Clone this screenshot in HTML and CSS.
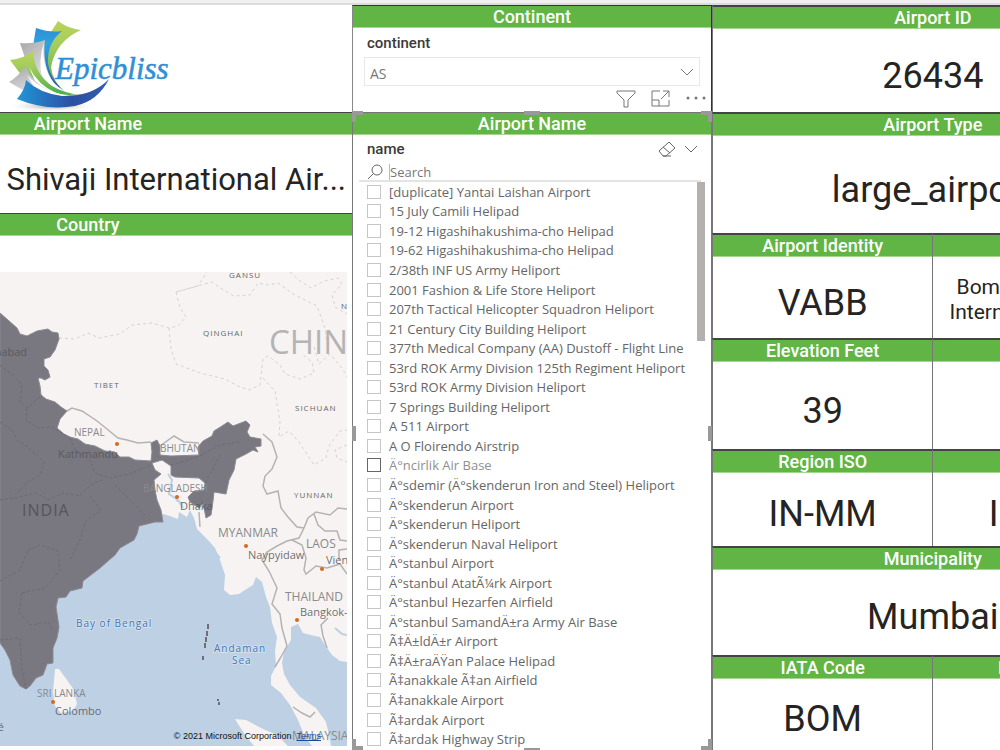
FILE: index.html
```html
<!DOCTYPE html>
<html lang="en">
<head>
<meta charset="utf-8">
<title>Airport report</title>
<link rel="stylesheet" href="styles.css">
</head>
<body>
<div class="topbar"></div>
<main class="report">
  <section class="col col-left">
    <div class="brand">
      <svg class="logo" viewBox="0 0 180 107" role="img" aria-label="Epicbliss">
        <defs>
          <linearGradient id="lime" x1="0" y1="0" x2="0" y2="1"><stop offset="0" stop-color="#b9d45c"/><stop offset=".35" stop-color="#a4cc5c"/><stop offset="1" stop-color="#45ad4b"/></linearGradient>
          <linearGradient id="sky" x1="0" y1="0" x2="0" y2="1"><stop offset="0" stop-color="#2f8ed6"/><stop offset=".25" stop-color="#2ba5e0"/><stop offset="1" stop-color="#2c4fa3"/></linearGradient>
          <linearGradient id="silver" x1="0" y1="0" x2="1" y2="1"><stop offset="0" stop-color="#a5a5a7"/><stop offset=".5" stop-color="#dcdcde"/><stop offset="1" stop-color="#8f9092"/></linearGradient>
          <linearGradient id="deep" x1="0" y1="0" x2="1" y2="0"><stop offset="0" stop-color="#2196d8"/><stop offset=".6" stop-color="#2c4fa3"/><stop offset="1" stop-color="#3160ad"/></linearGradient>
          <radialGradient id="shade"><stop offset="0" stop-color="#777" stop-opacity=".7"/><stop offset="1" stop-color="#fff" stop-opacity="0"/></radialGradient>
        </defs>
        <ellipse cx="52" cy="101" rx="46" ry="6" fill="url(#shade)"/>
        <path fill="url(#lime)" d="M51 27 58 16Q69 24 81 25 56 36 51 62 52 76 66 88 50 82 46 60Z"/>
        <path fill="url(#sky)" d="M33 41 36 23Q50 28 62 26 47 38 48 58 50 76 68 89 46 86 38 64Z"/>
        <path fill="url(#silver)" d="M24 50 20 38Q34 39 45 35 42 62 54 78 62 87 74 90 42 88 30 68Z"/>
        <path fill="#fff" d="M44 37Q41 62 54 78 62 87 78 90 52 89 42 72 38 56 44 37Z"/>
        <path fill="url(#lime)" d="M10 55Q23 54 33 46 34 68 52 81 64 88 80 90 56 94 34 82L19 67Z"/>
        <path fill="#fff" d="M29 62Q38 80 56 88 68 92 84 88 60 96 40 88Z"/>
        <path fill="url(#silver)" d="M9 77Q19 71 25 61 33 78 50 86 68 94 94 86 70 98 40 94L21 84Z"/>
        <path fill="#fff" d="M27 70Q43 88 76 92 60 97 40 92Z"/>
        <path fill="url(#deep)" d="M26 75Q39 88 62 91 92 92 109 74 98 96 75 101 46 106 17 94 25 85 26 75Z"/>
        <text class="logo-text" x="55" y="74">Epicbliss</text>
      </svg>
    </div>
    <div class="card card-name">
      <h2 class="title">Airport Name</h2>
      <p class="value value-name">Shivaji International Air...</p>
    </div>
    <div class="card card-map">
      <h2 class="title">Country</h2>
      <div class="map">
        <svg class="map-art" viewBox="0 272 347 474" preserveAspectRatio="xMinYMin slice">
          <rect y="272" width="347" height="474" fill="#bdd0e4"/>
          <g fill="#f6f3f2">
            <path d="M0 272H347V662L340 661 332 655 325 645 320 637 315 636 303 633 298 624 291 627 291 640 284 652 282 663 284 674 290 685 300 697 316 708 326 722 329 735 331 746H312L304 735 298 720 290 705 281 693 271 685 271 676 276 666 275 651 277 637 272 623 270 607 266 597 262 582 256 577 253 585 245 590 239 594 230 595 224 590 225 575 220 560 215 548 209 541 197 529 194 518 190 510 187 517 179 512 178 519 170 516 163 514 0 500Z"/>
            <path d="M235 719 246 720 263 729 277 735 288 746H254L245 735Z"/>
            <path d="M55 669 59 669 67 680 74 690 77 704 73 711 61 713 55 706 53 692Z"/>
          </g>
          <g fill="none" stroke="#bdd0e4" stroke-width="2"><path d="M168 474 172 480 169 494 178 500 183 508M176 500 183 504M213 548l3 5 4 5M335 628l7 6 5 1"/></g>
          <g fill="none" stroke="#d5d2d1" stroke-width="1" stroke-dasharray="3 3">
            <path d="M59 338 75 339 88 333 99 338 120 334 132 325 152 323 169 328 178 326 186 317 180 308 176 292 198 286 207 272M176 292 212 282 225 291 234 296 250 295 258 283 268 285 278 283 293 294 317 306 325 328 327 344M169 328 171 349 176 364 200 373 225 379 238 386 249 390 260 385 263 359 268 356 280 365 285 374 300 379 314 373 312 362 302 354M290 272 300 281 311 288 324 281 338 278 342 284 332 295 335 307 347 314M263 378 275 391 280 422 279 437 289 431 299 442 314 465 326 458 329 446 340 431 347 430M314 347 319 364 330 354 342 368 347 377M347 445 335 450 337 458 347 462"/>
          </g>
          <g fill="none" stroke="#b4b3b4" stroke-width="1.5">
            <path d="M67 411 72 408 82 411 97 421 107 429 118 438 127 440 138 443 151 442M160 446 174 436 184 442 199 443M263 434 272 442 277 457 272 469 265 476 263 486 267 494 278 491 281 508 288 517 297 527 304 528M199 512 200 527M304 528 308 518 316 512 330 515 338 508 347 509M314 514 318 525 325 531 337 531 340 540 347 541M304 528 299 538 287 541 277 546 267 552 262 560 269 571 277 588 272 604 280 614 282 628 287 646 281 657 275 667M292 540 302 545 306 558 304 570 306 574 316 566 327 568 340 564 347 574M347 549 339 550 339 560M328 618 321 625 323 636 327 648M293 707 302 713 310 717 315 712"/>
          </g>
          <path fill="#797780" stroke="#8c8a92" stroke-width="1" d="M0 313 8 320 17 328 20 334 27 336 37 331 48 329 52 332 58 333 59 339 55 350 50 357 44 359 44 366 48 370 50 377 45 380 41 378 38 378 40 386 41 395 46 399 55 402 61 407 67 411 60 419 57 428 64 434 70 437 78 439 85 444 95 446 105 451 115 452 120 457 129 457 135 460 151 461 152 452 151 443 157 440 160 446 160 455 171 456 199 455 198 447 203 441 212 436 214 431 222 426 228 422 233 426 246 421 250 425 247 432 250 437 261 439 261 446 255 447 258 452 253 450 246 454 236 459 234 470 229 480 226 494 220 493 214 492 213 501 211 515 206 518 203 503 199 508 190 502 188 497 194 491 204 490 205 483 199 478 175 477 171 475 171 466 162 460 152 463 155 470 161 474 154 480 155 490 157 500 161 510 163 522 155 522 147 524 139 526 137 534 134 540 120 548 115 555 108 561 100 568 83 581 82 588 70 591 66 597 58 598 56 607 59 627 57 638 53 648 53 663 47 664 43 675 36 678 30 686 26 689 20 686 13 675 10 660 5 650 0 643Z"/>
          <path fill="none" stroke="#6c6a73" stroke-dasharray="3 2" d="M0 365 15 377 22 385 20 402 27 408 42 395M27 408 26 420 38 428 52 427 60 432 70 438M0 422 12 430 18 441 28 447 44 462 40 475 28 482 15 495M70 438 75 450 90 460 95 473 110 478 130 474 150 465M0 500 20 497 36 493 48 500 63 493 80 496 90 485 102 480M90 496 101 510 85 522 80 540 70 560M28 550 40 545 58 551 60 570 45 588 22 593M0 581 20 570 28 550M22 593 19 612 30 625 48 622 53 630M0 640 20 638 22 670 26 689M115 485 130 500 145 515M171 465 200 456 220 445 240 442M205 483 214 467 220 455"/>
          <g fill="none" stroke="#6d6f78" stroke-width="2"><path d="M208 624v5M207 631v5M206 637v5M205 643v5M203 656v4M218 699v2M219 702v3" /></g>
          <g fill="#d7681e"><circle cx="117" cy="444" r="2"/><circle cx="177" cy="497" r="2"/><circle cx="246" cy="546" r="2"/><circle cx="322" cy="569" r="2"/><circle cx="297" cy="620" r="2"/><circle cx="53" cy="702" r="2"/></g>
          <g class="map-region">
            <text x="229" y="278">GANSU</text><text x="203" y="336">QINGHAI</text><text x="94" y="388">TIBET</text><text x="295" y="411">SICHUAN</text><text x="294" y="498">YUNNAN</text><text x="341" y="309">N</text>
          </g>
          <text class="map-china" x="269" y="354">CHINA</text>
          <g class="map-country">
            <text x="74" y="436">NEPAL</text><text x="160" y="452">BHUTAN</text><text x="143" y="492">BANGLADESH</text><text x="37" y="697">SRI LANKA</text>
          </g>
          <g class="map-country map-country-lg">
            <text x="218" y="537">MYANMAR</text><text x="306" y="548">LAOS</text><text x="285" y="601">THAILAND</text><text x="292" y="740">MALAYSIA</text>
          </g>
          <text class="map-india" x="22" y="516">INDIA</text>
          <g class="map-city">
            <text x="-26" y="356">Islamabad</text><text x="58" y="458">Kathmandu</text><text x="180" y="510">Dhaka</text><text x="248" y="559">Naypyidaw</text><text x="326" y="564">Vientiane</text><text x="300" y="616">Bangkok-</text><text x="55" y="715">Colombo</text><text x="-21" y="731">Malé</text>
          </g>
          <g class="map-sea">
            <text x="76" y="627">Bay of Bengal</text><text x="214" y="652">Andaman</text><text x="232" y="664">Sea</text>
          </g>
        </svg>
        <p class="credit">© 2021 Microsoft Corporation &nbsp;<a href="#terms">Terms</a></p>
      </div>
    </div>
  </section>

  <section class="col col-mid">
    <div class="slicer slicer-continent">
      <h2 class="title">Continent</h2>
      <div class="slicer-body">
        <label class="field" for="continent">continent</label>
        <div class="drop">
          <select id="continent"><option>AS</option></select>
          <svg class="chev" viewBox="0 0 14 8"><path d="M1 1 7 7 13 1"/></svg>
        </div>
        <div class="tools">
          <button aria-label="Filters"><svg viewBox="0 0 20 20"><path d="M1 2H19V4L12 11V18H8V11L1 4Z"/></svg></button>
          <button aria-label="Focus mode"><svg viewBox="0 0 20 20"><path d="M9 2H1V17H18V11M1 11H8V17M12 2H18V8M18 2 10 10"/></svg></button>
          <button aria-label="More options"><svg viewBox="0 0 20 20"><g class="dots"><circle cx="2" cy="9" r="1.5"/><circle cx="10" cy="9" r="1.5"/><circle cx="18" cy="9" r="1.5"/></g></svg></button>
        </div>
      </div>
    </div>
    <div class="slicer slicer-name">
      <h2 class="title">Airport Name</h2>
      <div class="name-head">
        <span class="field">name</span>
        <button aria-label="Clear selections"><svg viewBox="0 0 18 18"><path d="M1 11 11 2 17 8 8 16H5ZM5 7 12 13M5 16H13"/></svg></button>
        <button aria-label="Collapse"><svg class="chev" viewBox="0 0 14 8"><path d="M1 1 7 7 13 1"/></svg></button>
      </div>
      <div class="search">
        <svg viewBox="0 0 16 16"><circle cx="10" cy="6" r="5"/><path d="M6.500 9.500 1 15"/></svg>
        <input type="text" placeholder="Search" aria-label="Search">
      </div>
      <div class="list-wrap">
        <div class="list">
          <label><input type="checkbox">[duplicate] Yantai Laishan Airport</label>
          <label><input type="checkbox">15 July Camili Helipad</label>
          <label><input type="checkbox">19-12 Higashihakushima-cho Helipad</label>
          <label><input type="checkbox">19-62 Higashihakushima-cho Helipad</label>
          <label><input type="checkbox">2/38th INF US Army Heliport</label>
          <label><input type="checkbox">2001 Fashion &amp; Life Store Heliport</label>
          <label><input type="checkbox">207th Tactical Helicopter Squadron Heliport</label>
          <label><input type="checkbox">21 Century City Building Heliport</label>
          <label><input type="checkbox">377th Medical Company (AA) Dustoff - Flight Line</label>
          <label><input type="checkbox">53rd ROK Army Division 125th Regiment Heliport</label>
          <label><input type="checkbox">53rd ROK Army Division Heliport</label>
          <label><input type="checkbox">7 Springs Building Heliport</label>
          <label><input type="checkbox">A 511 Airport</label>
          <label><input type="checkbox">A O Floirendo Airstrip</label>
          <label class="hovered"><input type="checkbox">Ä°ncirlik Air Base</label>
          <label><input type="checkbox">Ä°sdemir (Ä°skenderun Iron and Steel) Heliport</label>
          <label><input type="checkbox">Ä°skenderun Airport</label>
          <label><input type="checkbox">Ä°skenderun Heliport</label>
          <label><input type="checkbox">Ä°skenderun Naval Heliport</label>
          <label><input type="checkbox">Ä°stanbul Airport</label>
          <label><input type="checkbox">Ä°stanbul AtatÃ¼rk Airport</label>
          <label><input type="checkbox">Ä°stanbul Hezarfen Airfield</label>
          <label><input type="checkbox">Ä°stanbul SamandÄ±ra Army Air Base</label>
          <label><input type="checkbox">Ã‡Ä±ldÄ±r Airport</label>
          <label><input type="checkbox">Ã‡Ä±raÄŸan Palace Helipad</label>
          <label><input type="checkbox">Ã‡anakkale Ã‡an Airfield</label>
          <label><input type="checkbox">Ã‡anakkale Airport</label>
          <label><input type="checkbox">Ã‡ardak Airport</label>
          <label><input type="checkbox">Ã‡ardak Highway Strip</label>
        </div>
        <div class="scroll"><div class="thumb"></div></div>
      </div>
      <i class="handle h-corner h-tl"></i><i class="handle h-corner h-tr"></i><i class="handle h-corner h-bl"></i><i class="handle h-corner h-br"></i>
      <i class="handle h-bar h-t"></i><i class="handle h-bar h-b"></i><i class="handle h-side h-l"></i><i class="handle h-side h-r"></i>
    </div>
  </section>

  <section class="col col-right">
    <div class="tiles">
      <div class="tile wide"><h2 class="title">Airport ID</h2><p class="value">26434</p></div>
      <div class="tile wide"><h2 class="title">Airport Type</h2><p class="value">large_airport</p></div>
      <div class="tile"><h2 class="title">Airport Identity</h2><p class="value">VABB</p></div>
      <div class="tile"><h2 class="title"></h2><p class="value value-small">Bombay (Mumbai)<br>International Airport</p></div>
      <div class="tile"><h2 class="title">Elevation Feet</h2><p class="value">39</p></div>
      <div class="tile"><h2 class="title"></h2><p class="value">19.08</p></div>
      <div class="tile"><h2 class="title">Region ISO</h2><p class="value">IN-MM</p></div>
      <div class="tile"><h2 class="title"></h2><p class="value">IN-MM</p></div>
      <div class="tile wide"><h2 class="title">Municipality</h2><p class="value">Mumbai</p></div>
      <div class="tile"><h2 class="title">IATA Code</h2><p class="value">BOM</p></div>
      <div class="tile"><h2 class="title">Local Code</h2><p class="value"></p></div>
    </div>
  </section>
</main>
</body>
</html>
```
FILE: styles.css
```css
* { box-sizing: border-box; }
body {
  margin: 0;
  height: 100vh;
  display: flex;
  flex-direction: column;
  overflow: hidden;
  background: #fff;
  color: #252423;
  font-family: Roboto, "Liberation Sans", sans-serif;
}
h2, p { margin: 0; }
button { border: 0; padding: 0; background: none; display: flex; }
svg { display: block; }

.topbar { flex: none; height: 5px; background: #f0f0f0; border-bottom: 2px solid #dcdcdc; }
.report {
  flex: 1;
  min-height: 0;
  display: grid;
  grid-template-columns: 352fr 360fr 288fr;
  grid-template-rows: minmax(0, 1fr);
}
.col { min-width: 0; min-height: 0; display: flex; flex-direction: column; overflow: hidden; }

.title {
  flex: none;
  height: 22px;
  background: #60b544;
  border-bottom: 1px solid #a5d68f;
  color: #fff;
  font-size: 18px;
  line-height: 22px;
  font-weight: 500;
  text-align: center;
  white-space: nowrap;
}
.value {
  flex: 1;
  display: flex;
  align-items: center;
  justify-content: center;
  padding-top: 10px;
  font-size: 36px;
  white-space: nowrap;
}

/* left column */
.brand { flex: none; height: 107px; }
.logo { height: 107px; width: 180px; }
.logo-text { font: italic 31px "Liberation Serif", serif; fill: #2f8fd6; stroke: #2f8fd6; stroke-width: 0.5px; }
.card { display: flex; flex-direction: column; border-top: 1px solid #444; }
.card .title { padding-right: 50%; }
.card-name { flex: none; height: 101px; }
.card-map { flex: 1; min-height: 0; }
.value-name { font-size: 31px; justify-content: flex-end; padding-right: 6px; }
.map { position: relative; flex: 1; min-height: 0; margin: 36px 5px 4px 0; overflow: hidden; }
.map-art { width: 100%; height: 100%; font-family: "Open Sans", "Noto Sans", sans-serif; }
.map-region { font-size: 8px; letter-spacing: 1px; fill: #666; }
.map-china { font-size: 33px; fill: #b5b4b4; }
.map-country { font-size: 10px; fill: #8a8a8c; }
.map-country-lg { font-size: 12px; }
.map-india { font-size: 16px; fill: #56555c; letter-spacing: 1px; }
.map-city { font-size: 11px; fill: #555; fill-opacity: 0.85; }
.map-sea { font-size: 10px; letter-spacing: 1px; fill: #4577b5; stroke: #d3dfec; stroke-width: 2px; paint-order: stroke; }
.credit { position: absolute; right: 26px; bottom: 4px; font: 9px/12px "Liberation Sans", sans-serif; color: #111; }
.credit a { color: #1a4b9b; }

/* middle column */
.slicer { display: flex; flex-direction: column; border: 1px solid #333; border-left-color: #888; }
.slicer-continent { flex: none; height: 107px; border-bottom: 0; }
.slicer-body { padding: 5px 11px 0 11px; }
.field { display: block; padding-left: 3px; font-size: 15px; line-height: 20px; font-weight: 500; color: #3b3a39; }
.drop { position: relative; margin-top: 4px; height: 29px; border: 1px solid #e8e8e8; }
.drop select {
  width: 100%;
  height: 100%;
  padding: 4px 5px 0;
  border: 0;
  background: none;
  appearance: none;
  font: 14px "Open Sans", sans-serif;
  color: #777;
}
.chev { width: 14px; height: 8px; fill: none; stroke: #777; }
.drop .chev { position: absolute; right: 5px; top: 10px; pointer-events: none; }
.tools { display: flex; justify-content: flex-end; gap: 15px; margin: 3px -6px 0 0; }
.tools svg { width: 20px; height: 20px; fill: none; stroke: #777; }
.tools .dots { fill: #777; stroke: none; }
.slicer-name { position: relative; flex: 1; min-height: 0; border: 1px solid #777; border-bottom: 0; }
.name-head { flex: none; height: 28px; display: flex; align-items: center; gap: 8px; padding: 0 13px 0 11px; }
.name-head .field { flex: 1; }
.name-head svg { fill: none; stroke: #666; }
.name-head button svg:not(.chev) { width: 18px; height: 18px; }
.search { flex: none; height: 19px; display: flex; align-items: center; margin: 0 10px 0 6px; border-bottom: 2px solid #e4e4e4; padding-left: 8px; }
.search svg { width: 16px; height: 16px; fill: none; stroke: #666; }
.search input {
  flex: 1;
  height: 16px;
  margin-left: 6px;
  padding: 0;
  border: 0;
  border-left: 1px solid #bbb;
  outline: 0;
  background: none;
  font: 13px/14px "Open Sans", sans-serif;
  color: #777;
}
.search input::placeholder { color: #777; }
.list-wrap { flex: 1; min-height: 0; display: flex; padding-left: 14px; }
.list { flex: 1; min-width: 0; display: flex; flex-direction: column; padding-bottom: 1px; }
.list label {
  flex: 1;
  min-height: 0;
  display: flex;
  align-items: center;
  gap: 8px;
  font: 13px/18px "Open Sans", "Noto Sans", sans-serif;
  color: #666;
  white-space: nowrap;
}
.list input { appearance: none; flex: none; width: 14px; height: 14px; margin: 0; border: 1px solid #c8c6c4; background: #fff; }
.list .hovered { color: #8f8f8f; }
.list .hovered input { border-color: #666; }
.scroll { flex: none; width: 8px; margin-right: 6px; }
.thumb { height: 28%; background: #b3b0ad; }
.handle { position: absolute; border: 0 solid #999; }
.h-corner { width: 11px; height: 11px; }
.h-tl { left: -1px; top: -2px; border-width: 4px 0 0 4px; }
.h-tr { right: -1px; top: -2px; border-width: 4px 4px 0 0; }
.h-bl { left: -1px; bottom: 0; border-width: 0 0 4px 4px; }
.h-br { right: -1px; bottom: 0; border-width: 0 4px 4px 0; }
.h-bar { left: 50%; width: 16px; margin-left: -8px; border-top-width: 4px; }
.h-t { top: -2px; }
.h-b { bottom: -2px; }
.h-side { top: 50%; height: 15px; margin-top: -6px; border-left-width: 4px; }
.h-l { left: -1px; }
.h-r { right: -1px; }

/* right column: the tiles run past the window's edge */
.tiles {
  flex: 1;
  min-height: 0;
  width: 153%;
  display: grid;
  grid-template-columns: 1fr 1fr;
  grid-template-rows: 107fr 121fr 105fr 110fr 97fr 109fr 95fr;
}
.tile { min-width: 0; min-height: 0; display: flex; flex-direction: column; border-top: 2px solid #444; border-left: 1px solid #777; overflow: hidden; }
.wide { grid-column: span 2; }
.value-small { padding-top: 4px; font-size: 21px; line-height: 25px; text-align: center; }
```
